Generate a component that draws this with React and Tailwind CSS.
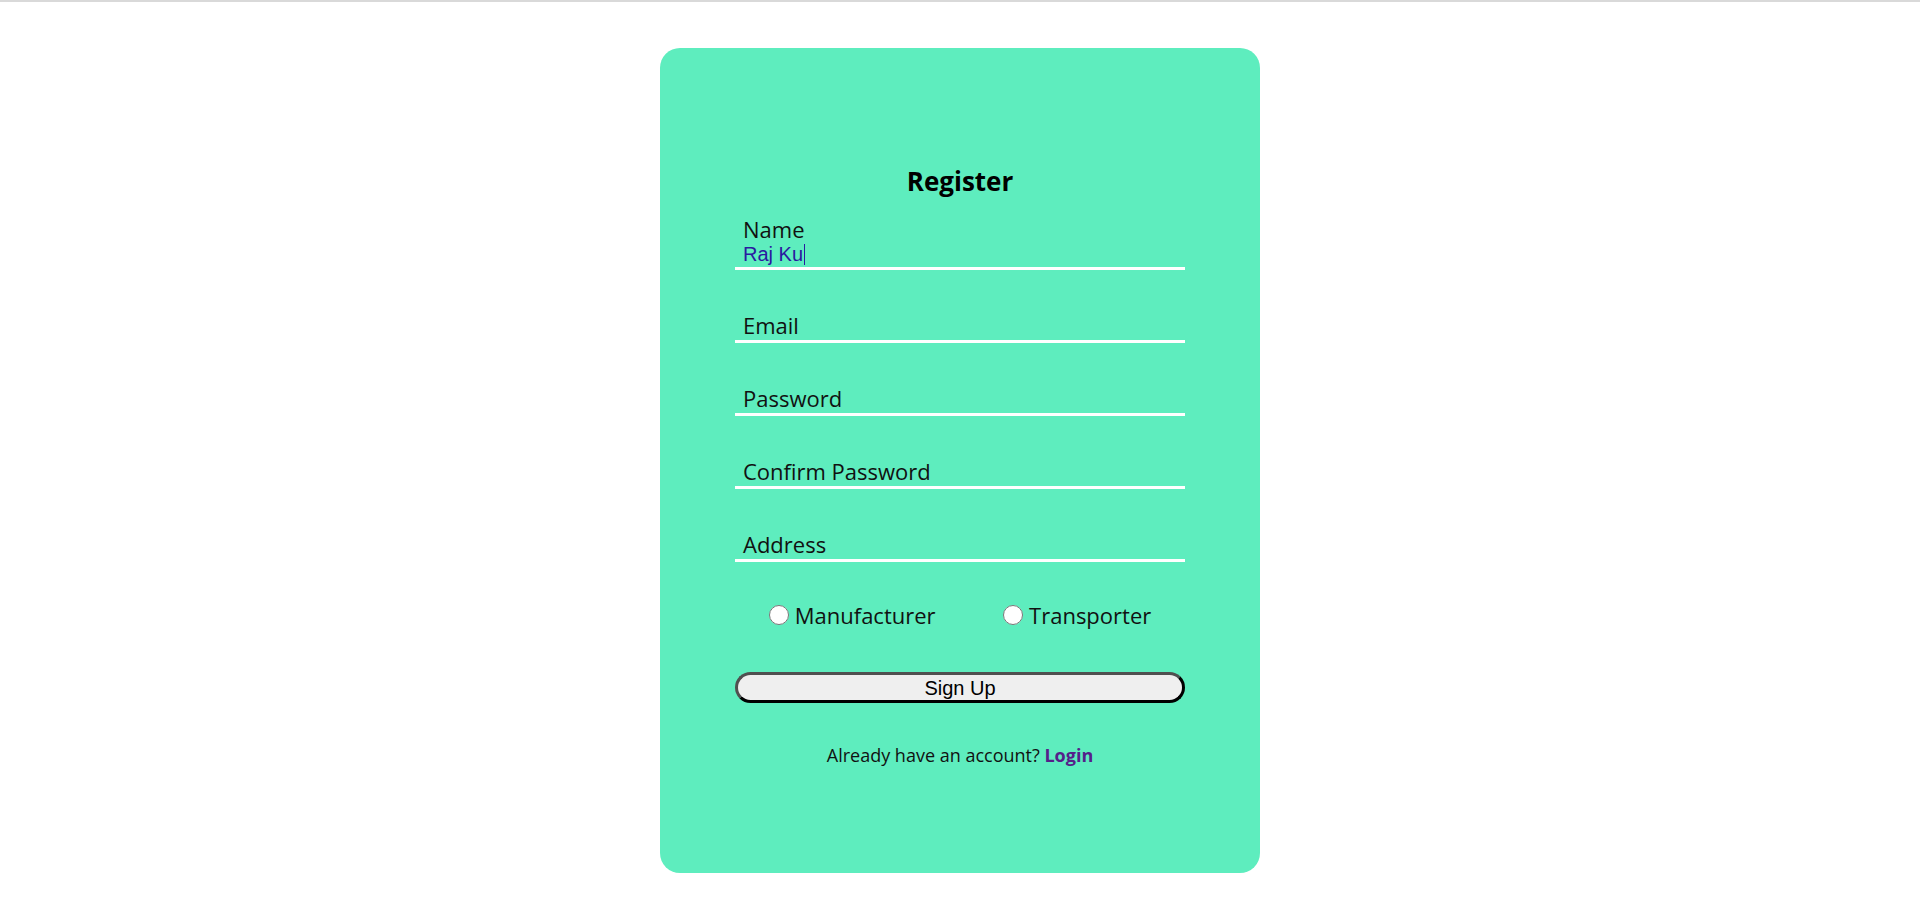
import React from 'react';

const fields = ['Email', 'Password', 'Confirm Password', 'Address'];

const Field = ({ label }) => (
  <div className="mt-[43px] border-b-[3px] border-white pb-[3px] pl-2">
    <div className="h-6 text-[22px] leading-6 text-[#111]">{label}</div>
  </div>
);

export default function App() {
  return (
    <div className="min-h-[916px] w-full border-t-2 border-[#d9d9d9] bg-white font-['Open_Sans',sans-serif]">
      <div className="mx-auto mt-[46px] h-[825px] w-[600px] rounded-[20px] bg-[#5eedbe] pt-[117px]">
        <div className="mx-auto w-[450px]">
          <h2 className="h-8 text-center text-[26px] font-bold leading-8 text-black">Register</h2>

          {/* name field, already typed into */}
          <div className="mt-[20px] border-b-[3px] border-white pl-2">
            <div className="h-6 text-[22px] leading-6 text-[#111]">Name</div>
            <div className="flex h-[26px] items-center font-['Liberation_Sans',Arial,sans-serif] text-[20px] text-[#2a1aa0]">
              Raj Ku<span className="ml-px inline-block h-[21px] w-px bg-[#2a1aa0]" />
            </div>
          </div>

          {fields.map((f) => (
            <Field key={f} label={f} />
          ))}

          <div className="mt-[38px] flex h-[30px] items-center justify-around text-[22px] leading-[30px] text-[#111]">
            <label className="flex items-center gap-[6px]">
              <input type="radio" name="role" className="m-0 h-[20px] w-[20px]" />
              Manufacturer
            </label>
            <label className="flex items-center gap-[6px]">
              <input type="radio" name="role" className="m-0 h-[20px] w-[20px]" />
              Transporter
            </label>
          </div>

          <button className="mt-[42px] block h-[31px] w-full rounded-full border-[3px] border-t-[#505050] border-l-[#505050] border-r-black border-b-black bg-[#efefef] font-['Liberation_Sans',Arial,sans-serif] text-[20px] leading-none text-black">
            Sign Up
          </button>

          <p className="mt-[39px] text-center text-[18px] leading-[27px] text-[#111]">
            Already have an account?{' '}
            <a className="font-bold text-[#55208a]">Login</a>
          </p>
        </div>
      </div>
    </div>
  );
}
